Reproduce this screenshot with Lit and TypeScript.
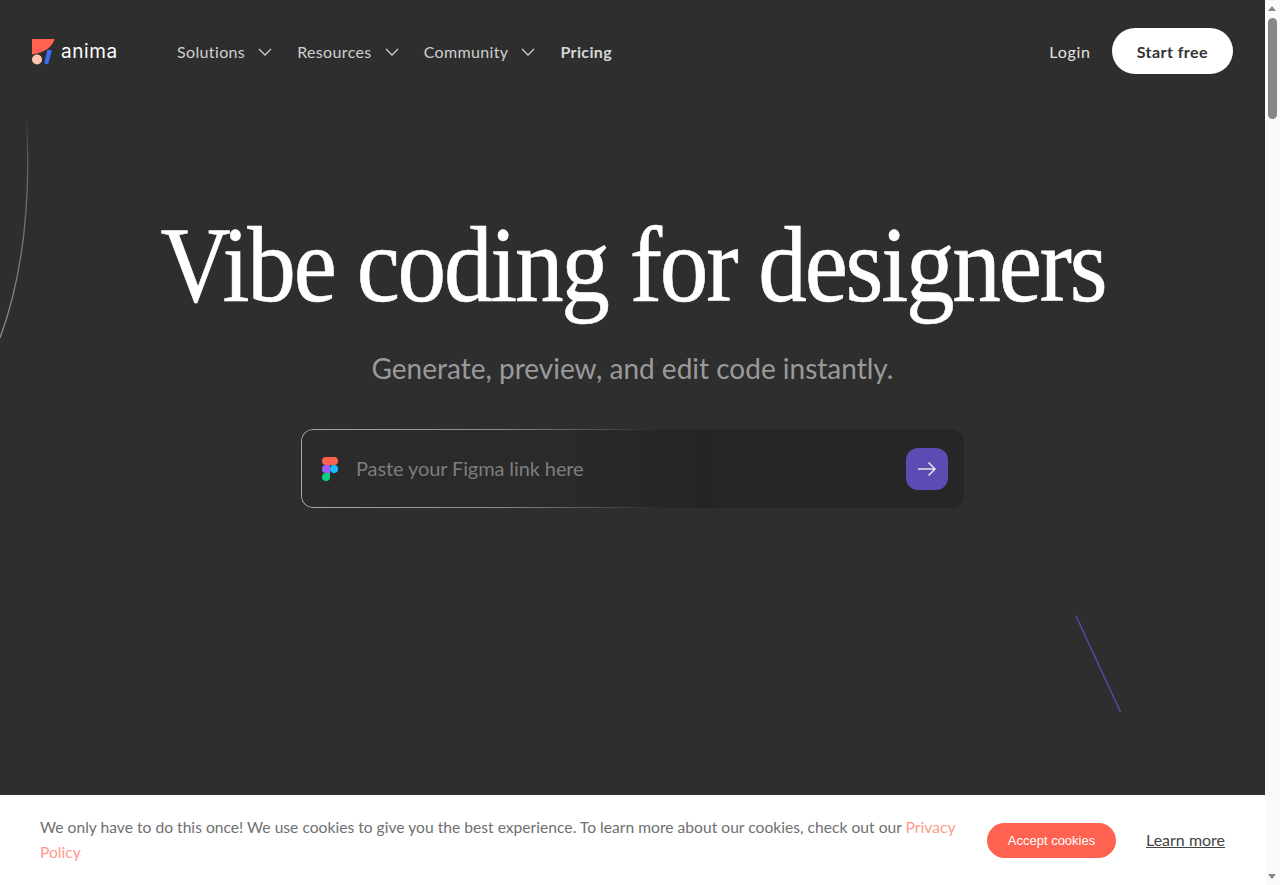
import { LitElement, html, css, svg } from "lit";
import { customElement } from "lit/decorators.js";

const chevron = html`<svg class="chev" width="14" height="8" viewBox="0 0 14 8" fill="none"><path d="M1 1l6 6 6-6" stroke="#cfcfcf" stroke-width="1.3"/></svg>`;

@customElement("app-root")
export class AppRoot extends LitElement {
  static styles = css`
    :host { display: block; height: 885px; overflow: hidden; font-family: "Lato", "Noto Sans", sans-serif; }
    .page { display: flex; height: 885px; position: relative; }
    main { flex: 1; min-width: 0; background: #2e2e2e; position: relative; display: flex; flex-direction: column; align-items: center; overflow: hidden; }
    nav { align-self: stretch; display: flex; align-items: center; height: 102px; padding: 2px 32px 0; box-sizing: border-box; flex: none; }
    .logo { display: flex; align-items: center; gap: 6px; margin-right: 60px; color: #fff; font-size: 19px; letter-spacing: 0.6px; width: 85px; font-family: "Inter", sans-serif; }
    .logo span { position: relative; top: -1px; }
    .links { display: flex; align-items: center; gap: 25px; color: #d0d0d0; font-size: 16px; letter-spacing: 0.36px; margin-top: -2px; }
    .link { display: flex; align-items: center; gap: 13px; }
    .link:first-child { gap: 13px; }
    .chev { display: block; margin-top: 1px; }
    .pricing { font-weight: 700; color: #d6d6d6; }
    .right { margin-left: auto; display: flex; align-items: center; gap: 21px; margin-top: -2px; }
    .login { color: #e4e4e4; font-size: 16px; letter-spacing: 0.7px; }
    .start { background: #fff; color: #333; font-size: 16px; font-weight: 700; height: 46px; padding: 0 25px; border-radius: 23px; display: flex; align-items: center; letter-spacing: 0.45px; }
    h1 { margin: 98px 0 0; font-family: "Liberation Serif", serif; font-weight: 400; font-size: 108px; line-height: 130px; color: #fff; letter-spacing: -2.5px; white-space: nowrap; -webkit-text-stroke: 0.6px #fff; transform: scaleX(0.9); }
    .sub { margin-top: 18px; color: #9a9a9a; font-size: 28px; line-height: 40px; }
    .box { margin-top: 41px; width: 663px; height: 79px; box-sizing: border-box; border-radius: 12px; position: relative; display: flex; align-items: center; padding: 0 16px 0 21px; background: linear-gradient(90deg, #2b2b2b 0%, #2a2a2a 40%, #252525 60%, #262626 100%); }
    .edge { position: absolute; inset: 0; border-radius: 12px; padding: 1px; background: linear-gradient(90deg, #a8a8a8 0%, #8a8a8a 30%, rgba(130,130,130,0) 55%); -webkit-mask: linear-gradient(#000 0 0) content-box, linear-gradient(#000 0 0); -webkit-mask-composite: xor; mask-composite: exclude; }
    .ph { margin-left: 18px; color: #7d7d7d; font-size: 20px; flex: 1; letter-spacing: -0.1px; margin-top: -2px; }
    .go { width: 42px; height: 42px; border-radius: 12px; background: #5c4bb2; display: flex; align-items: center; justify-content: center; }
    .deco { position: absolute; left: 0; top: 0; pointer-events: none; }
    .bar { width: 15px; background: #fafafa; display: flex; flex-direction: column; align-items: center; position: relative; z-index: 2; }
    .thumb { width: 9px; height: 101px; background: #868686; border-radius: 5px; margin-top: 18px; }
    .tri { position: absolute; left: 3px; width: 0; height: 0; border-left: 4.5px solid transparent; border-right: 4.5px solid transparent; }
    .up { top: 6px; border-bottom: 5px solid #858585; }
    .down { bottom: 6px; border-top: 5px solid #858585; }
    .cookie { position: absolute; left: 0; right: 15px; bottom: 0; height: 90px; background: #fff; display: flex; align-items: center; padding: 0 40px; box-sizing: border-box; }
    .msg { width: 920px; color: #707070; font-size: 15.6px; line-height: 25px; flex: none; margin-top: -1px; letter-spacing: 0.02px; }
    .msg a { color: #ff9a8c; }
    .accept { margin-left: 27px; width: 129px; height: 35px; border-radius: 18px; background: #ff6250; color: #fff; font-family: "Liberation Sans", sans-serif; font-size: 13px; display: flex; align-items: center; justify-content: center; flex: none; }
    .more { margin-left: 30px; color: #444; font-size: 16px; text-decoration: underline; white-space: nowrap; margin-top: -2px; }
  `;

  render() {
    return html`<div class="page">
      <main>
        <svg class="deco" width="1265" height="795" fill="none">
          ${svg`<defs><linearGradient id="arc" x1="0" y1="0" x2="0" y2="1"><stop offset="0" stop-color="#777" stop-opacity="0"/><stop offset=".25" stop-color="#666"/><stop offset="1" stop-color="#8c8c8c"/></linearGradient></defs>
          <path d="M26.500 118C30.500 190 25 270 0 338" stroke="url(#arc)" stroke-width="1.300"/>
          <path d="M1076 616L1120.500 712" stroke="#5c4bb2" stroke-width="1.300"/>`}
        </svg>
        <nav>
          <div class="logo">
            <svg width="23" height="26" viewBox="0 0 23 26" style="flex:none">
              <path d="M0 0H22.500C21 6 15 13.500 0 15.500Z" fill="#ff6250"/>
              <circle cx="5" cy="20.500" r="5" fill="#ffc4b0"/>
              <path d="M15.500 10.500L20 11.500 16.500 24C15.500 26 12 25.500 12.500 23Z" fill="#3b6cf5"/>
            </svg>
            <span>anima</span>
          </div>
          <div class="links">
            <div class="link">Solutions ${chevron}</div>
            <div class="link">Resources ${chevron}</div>
            <div class="link">Community ${chevron}</div>
            <div class="pricing">Pricing</div>
          </div>
          <div class="right">
            <div class="login">Login</div>
            <div class="start">Start free</div>
          </div>
        </nav>
        <h1>Vibe coding for designers</h1>
        <div class="sub">Generate, preview, and edit code instantly.</div>
        <div class="box">
          <div class="edge"></div>
          <svg width="16" height="24" viewBox="0 0 16 24" style="flex:none">
            <path d="M4 0h8a4 4 0 0 1 0 8H4a4 4 0 0 1 0-8Z" fill="#ff6250"/>
            <path d="M4 8h4v8H4a4 4 0 0 1 0-8Z" fill="#a259ff"/>
            <circle cx="12" cy="12" r="4" fill="#1abcfe"/>
            <path d="M4 16h4v4a4 4 0 1 1-4-4Z" fill="#0acf83"/>
          </svg>
          <div class="ph">Paste your Figma link here</div>
          <div class="go">
            <svg width="20" height="16" viewBox="0 0 20 16" fill="none"><path d="M1 8h17M11.500 1.500L18 8l-6.500 6.500" stroke="#e6e6e6" stroke-width="1.500"/></svg>
          </div>
        </div>
      </main>
      <div class="bar"><div class="tri up"></div><div class="thumb"></div><div class="tri down"></div></div>
      <div class="cookie">
        <div class="msg">We only have to do this once! We use cookies to give you the best experience. To learn more about our cookies, check out our <a>Privacy Policy</a></div>
        <div class="accept">Accept cookies</div>
        <div class="more">Learn more</div>
      </div>
    </div>`;
  }
}
